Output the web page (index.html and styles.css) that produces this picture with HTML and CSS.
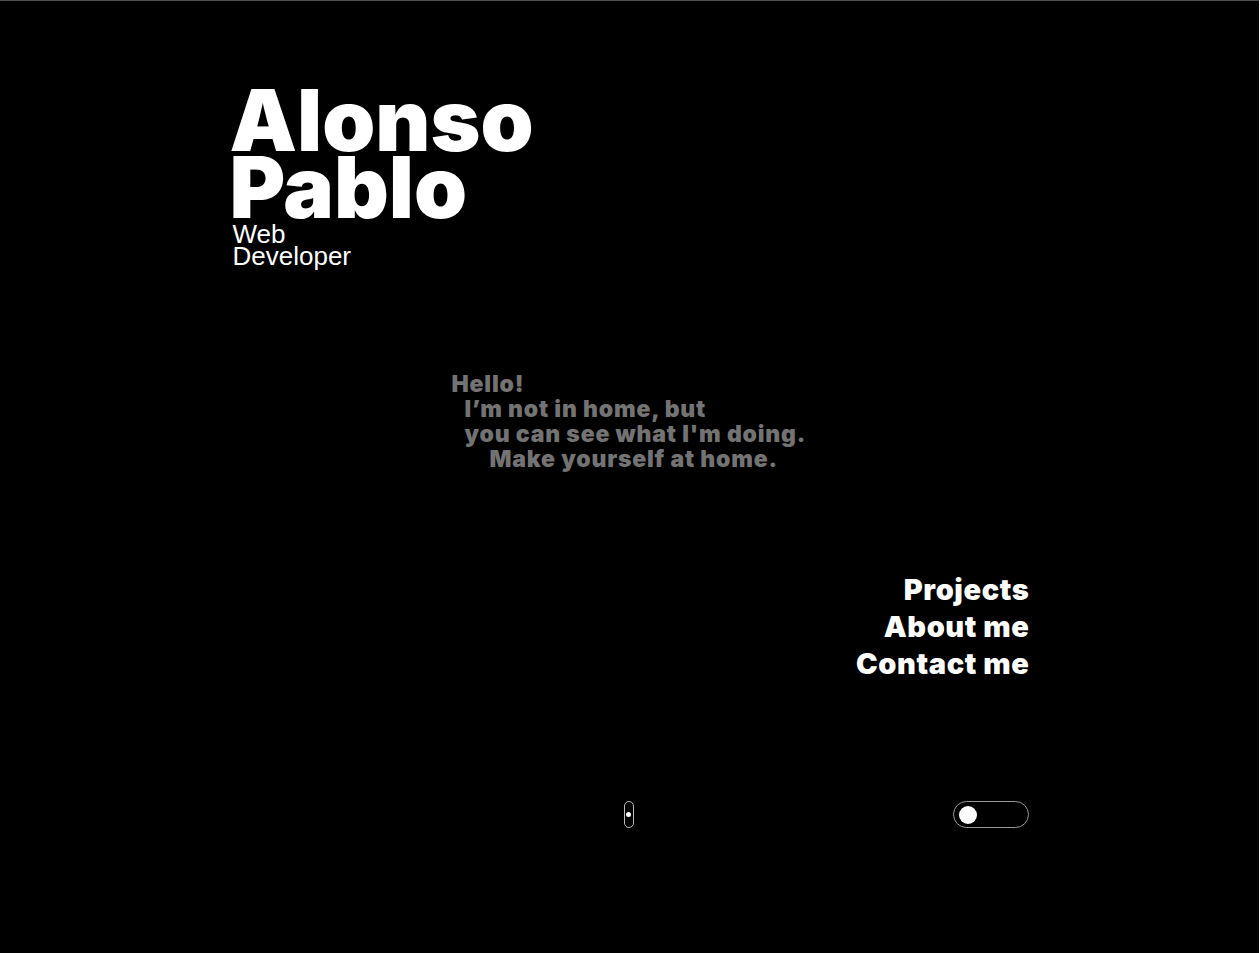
FILE: index.html
```html
<!DOCTYPE html>
<html lang="en">
<head>
<meta charset="utf-8">
<title>Alonso Pablo</title>
<link rel="stylesheet" href="styles.css">
</head>
<body>
<div class="page">
  <div class="wrap">
    <header class="hero">
      <h1 class="name">Alonso<br>Pablo</h1>
      <p class="role">Web<br>Developer</p>
    </header>
    <section class="greeting">
      <p class="g1">Hello!</p>
      <p class="g2">I’m not in home, but</p>
      <p class="g2">you can see what I'm doing.</p>
      <p class="g3">Make yourself at home.</p>
    </section>
    <nav class="menu">
      <a href="#">Projects</a>
      <a href="#">About me</a>
      <a href="#">Contact me</a>
    </nav>
    <footer class="controls">
      <div class="mouse"><span class="wheel"></span></div>
      <div class="toggle"><span class="knob"></span></div>
    </footer>
  </div>
</div>
</body>
</html>
```
FILE: styles.css
```css
html, body { margin: 0; padding: 0; background: #fff; }
.page {
  width: 1259px;
  height: 952px;
  background: #000;
  border-top: 1px solid #4d4d4d;
  overflow: hidden;
}
.wrap {
  width: 800px;
  margin: 0 auto;
  padding-top: 86px;
  display: flex;
  flex-direction: column;
}
.name {
  margin: 0;
  font-family: Inter, sans-serif;
  font-weight: 900;
  font-size: 85px;
  line-height: 67px;
  letter-spacing: 0;
  color: #fff;
}
.role {
  margin: 0;
  padding-top: 2px;
  padding-left: 3px;
  font-family: "Liberation Sans", Arial, sans-serif;
  font-size: 26px;
  line-height: 22px;
  color: #fff;
}
.greeting {
  margin-top: 105px;
  padding-left: 222px;
  font-family: Inter, sans-serif;
  font-weight: 900;
  font-size: 23px;
  line-height: 25px;
  letter-spacing: 0.8px;
  color: #737373;
}
.greeting p { margin: 0; }
.g2 { padding-left: 13px; }
.g3 { padding-left: 38px; }
.menu {
  margin-top: 99px;
  display: flex;
  flex-direction: column;
  align-items: flex-end;
}
.menu a {
  font-family: Inter, sans-serif;
  font-weight: 900;
  font-size: 29px;
  line-height: 37px;
  letter-spacing: 0.6px;
  color: #fff;
  text-decoration: none;
}
.controls {
  margin-top: 119px;
  display: flex;
  align-items: center;
  justify-content: space-between;
  padding-left: 394px;
  padding-right: 1px;
}
.mouse {
  width: 10px;
  height: 27px;
  border: 1px solid #bbb;
  border-radius: 5px;
  box-sizing: border-box;
  display: flex;
  align-items: center;
  justify-content: center;
}
.wheel {
  width: 5px;
  height: 5px;
  background: #fff;
  border-radius: 50%;
}
.toggle {
  width: 76px;
  height: 27px;
  border: 1px solid #999;
  border-radius: 14px;
  display: flex;
  align-items: center;
  padding-left: 5px;
  box-sizing: border-box;
}
.knob {
  width: 18px;
  height: 18px;
  background: #fff;
  border-radius: 50%;
}
```
